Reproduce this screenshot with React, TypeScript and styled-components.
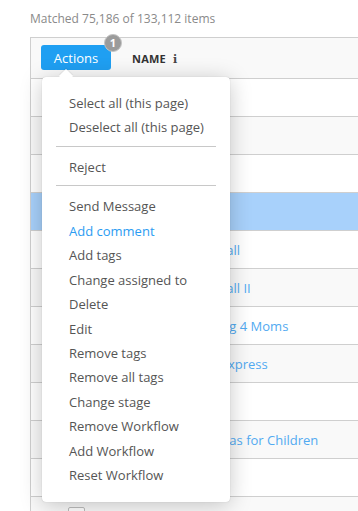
import React from "react";
import styled, { createGlobalStyle } from "styled-components";

const GlobalStyle = createGlobalStyle`
  html, body {
    margin: 0;
    padding: 0;
    background: #fff;
    overflow: hidden;
  }
  body {
    font-family: "Open Sans", "Liberation Sans", sans-serif;
  }
`;

const Page = styled.div`
  width: 358px;
  height: 511px;
  overflow: hidden;
  padding-left: 30px;
  box-sizing: border-box;
`;

const Summary = styled.div`
  height: 37px;
  line-height: 38px;
  font-size: 12px;
  color: #8a8a8a;
`;

const Table = styled.div`
  position: relative;
  width: 400px;
  border: 1px solid #cfcfcf;
  border-right: none;
`;

const HeaderRow = styled.div`
  display: flex;
  align-items: center;
  height: 40px;
  padding-left: 10px;
  background: #f9f9f9;
  border-bottom: 1px solid #cfcfcf;
`;

const ActionsButton = styled.button`
  position: relative;
  width: 70px;
  height: 25px;
  margin-top: -1px;
  border: none;
  border-radius: 3px;
  background: #1f9ff2;
  color: #fff;
  font-family: inherit;
  font-size: 13px;
  padding: 0;
`;

const Badge = styled.span`
  position: absolute;
  top: -11px;
  right: -11px;
  width: 18px;
  height: 18px;
  border-radius: 50%;
  background: #9b9b9b;
  border: 1px solid #c4c4c4;
  box-sizing: border-box;
  color: #fff;
  font-size: 11px;
  font-weight: 700;
  line-height: 16px;
  text-align: center;
`;

const ColumnTitle = styled.span`
  margin-left: 21px;
  font-size: 11px;
  font-weight: 700;
  color: #333;
  letter-spacing: 0.2px;
`;

const InfoMark = styled.span`
  margin-left: 7px;
  font-family: "DejaVu Serif", serif;
  font-weight: 700;
  font-size: 11px;
  color: #444;
`;

const Row = styled.div<{ $shade: "white" | "grey" | "selected" }>`
  display: grid;
  grid-template-columns: 102px 1fr;
  align-items: center;
  height: 37px;
  border-bottom: 1px solid #cfcfcf;
  background: ${(p) =>
    p.$shade === "selected" ? "#a8d1fb" : p.$shade === "grey" ? "#f9f9f9" : "#fff"};
`;

const CheckBox = styled.span`
  display: block;
  width: 17px;
  height: 17px;
  margin-left: 37px;
  border: 1px solid #bdbdbd;
  border-radius: 2px;
  box-sizing: border-box;
  background: #fff;
`;

const NameLink = styled.span`
  font-size: 13px;
  color: #52aaf1;
  white-space: nowrap;
`;

const Menu = styled.div`
  position: absolute;
  top: 39px;
  left: 11px;
  width: 188px;
  padding: 14px 0 14px;
  background: #fff;
  border-radius: 4px;
  box-shadow: 0 3px 22px rgba(0, 0, 0, 0.22), 0 0 1px rgba(0, 0, 0, 0.25);
  z-index: 2;

  &::before {
    content: "";
    position: absolute;
    top: -6px;
    left: 19px;
    width: 10px;
    height: 10px;
    background: #fff;
    transform: rotate(45deg);
    box-shadow: -1px -1px 1px rgba(0, 0, 0, 0.06);
  }
`;

const MenuItem = styled.div<{ $active?: boolean }>`
  position: relative;
  height: 24.45px;
  line-height: 24.45px;
  padding-left: 27px;
  font-size: 13px;
  color: ${(p) => (p.$active ? "#2b9cf2" : "#555")};
`;

const Divider = styled.div`
  height: 1px;
  margin: 6px 14px 8px;
  background: #c8c8c8;
`;

type RowData = { name: string; shade: "white" | "grey" | "selected"; check?: boolean };

const rows: RowData[] = [
  { name: "", shade: "white" },
  { name: "", shade: "grey" },
  { name: "", shade: "white" },
  { name: "", shade: "selected" },
  { name: "Dance Studio Hall", shade: "white" },
  { name: "Dance Studio Hall II", shade: "grey" },
  { name: "Prenatal Training 4 Moms", shade: "white" },
  { name: "Northwestern Express", shade: "grey" },
  { name: "", shade: "white" },
  { name: "Simple Craft Ideas for Children", shade: "grey" },
  { name: "", shade: "white" },
  { name: "1001 Arabian Nights", shade: "grey", check: true },
];

const firstGroup = ["Select all (this page)", "Deselect all (this page)"];
const lastGroup = [
  "Send Message",
  "Add comment",
  "Add tags",
  "Change assigned to",
  "Delete",
  "Edit",
  "Remove tags",
  "Remove all tags",
  "Change stage",
  "Remove Workflow",
  "Add Workflow",
  "Reset Workflow",
];

export default function App() {
  return (
    <>
      <GlobalStyle />
      <Page>
        <Summary>Matched 75,186 of 133,112 items</Summary>
        <Table>
          <HeaderRow>
            <ActionsButton>
              Actions
              <Badge>1</Badge>
            </ActionsButton>
            <ColumnTitle>
              NAME<InfoMark>i</InfoMark>
            </ColumnTitle>
          </HeaderRow>
          {rows.map((r, i) => (
            <Row key={i} $shade={r.shade}>
              <span>{r.check && <CheckBox />}</span>
              <NameLink>{r.name}</NameLink>
            </Row>
          ))}
          <Menu>
            {firstGroup.map((t) => (
              <MenuItem key={t}>{t}</MenuItem>
            ))}
            <Divider />
            <MenuItem>Reject</MenuItem>
            <Divider />
            {lastGroup.map((t) => (
              <MenuItem key={t} $active={t === "Add comment"}>
                {t}
              </MenuItem>
            ))}
          </Menu>
        </Table>
      </Page>
    </>
  );
}
